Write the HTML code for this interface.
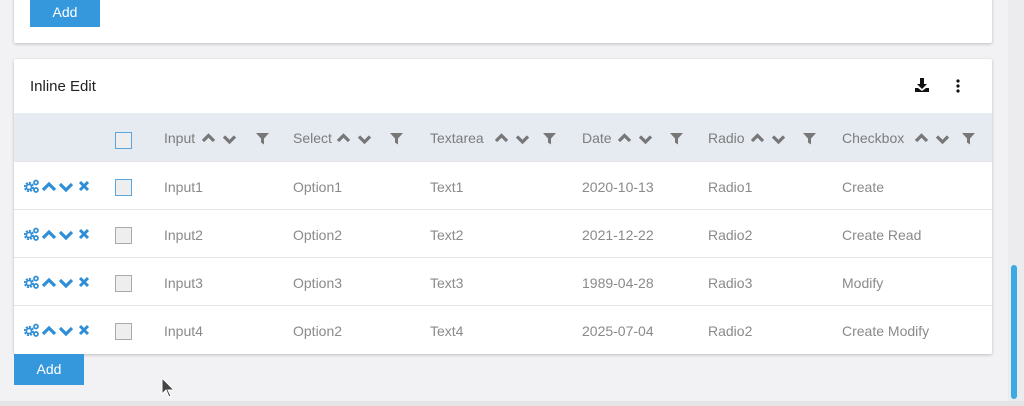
<!DOCTYPE html>
<html><head><meta charset="utf-8"><style>
*{margin:0;padding:0;box-sizing:border-box}
body{width:1024px;height:406px;background:#f2f2f4;font-family:"Liberation Sans",sans-serif;position:relative;overflow:hidden}
.card{position:absolute;background:#fff;box-shadow:0 1px 3px rgba(0,0,0,.22);border-radius:2px}
.btn{position:absolute;background:#3598dc;color:#fff;font-size:14px;text-align:center}
.t{position:absolute;font-size:14px;color:#8a8a8a}
.h{color:#7d7d7d}
.cb{position:absolute;width:17px;height:17px;background:#eee;border:1px solid #aaa}
.cb.b{border-color:#5aa7e0}
.row{position:absolute;left:0;width:978px;height:48px;border-top:1px solid #e5e5e5}
svg{position:absolute}
</style></head><body>
<div class="card" style="left:14px;top:-6px;width:978px;height:49px"></div>
<div class="btn" style="left:30px;top:0;width:70px;height:27px;line-height:24px">Add</div>

<div class="card" style="left:14px;top:59px;width:978px;height:295px">
  <div class="t" style="left:16px;top:19px;color:#222;font-size:15px">Inline Edit</div>
  <svg style="left:900px;top:18px" width="16" height="16" viewBox="0 0 16 16"><path d="M6 1h4v6h3l-5 5-5-5h3z" fill="#111"/><path d="M1 11h3l4 3 4-3h3v4H1z" fill="#111"/></svg>
  <svg style="left:942px;top:20px" width="4" height="14" viewBox="0 0 4 14"><circle cx="2" cy="2" r="1.6" fill="#111"/><circle cx="2" cy="7" r="1.6" fill="#111"/><circle cx="2" cy="12" r="1.6" fill="#111"/></svg>
  <div style="position:absolute;left:0;top:54px;width:978px;height:48px;background:#e6eaf1"></div>
</div>

<div id="tbl" style="position:absolute;left:14px;top:113px;width:978px;height:241px"></div>

<div class="btn" style="left:14px;top:354px;width:70px;height:31px;line-height:31px">Add</div>
<svg style="left:161px;top:377px" width="14" height="22" viewBox="0 0 14 22"><path d="M1 1v16l4-4 3 7 2-1-3-6h6z" fill="#444" stroke="#fff" stroke-width="1"/></svg>

<div style="position:absolute;left:1008px;top:0;width:16px;height:401px;background:#ececef"></div>
<div style="position:absolute;left:1011px;top:265px;width:6px;height:134px;background:#3aa9e6;border-radius:3px"></div>
<div style="position:absolute;left:0;top:401px;width:1024px;height:5px;background:#e4e4e6"></div>

<script>
var T=document.getElementById('tbl');
var up='<path d="M2 9l5.5-5.5 5.5 5.5" fill="none" stroke="#777" stroke-width="3.2"/>';
var dn='<path d="M2 3.5l5.5 5.5 5.5-5.5" fill="none" stroke="#777" stroke-width="3.2"/>';
var fl='<path d="M0 0h13l-5 5.5v6l-3-2v-4z" fill="#777"/>';
var cols=[[150,'Input',187,242],[279,'Select',322,376],[416,'Textarea',480,529],[568,'Date',603,656],[694,'Radio',736,789],[828,'Checkbox',900,948]];
var h='<div class="cb b" style="left:101px;top:19px"></div>';
cols.forEach(function(c){
 h+='<div class="t h" style="left:'+c[0]+'px;top:17px">'+c[1]+'</div>';
 h+='<svg style="left:'+c[2]+'px;top:19px" width="15" height="12">'+up+'</svg>';
 h+='<svg style="left:'+(c[2]+21)+'px;top:20px" width="15" height="12">'+dn+'</svg>';
 h+='<svg style="left:'+c[3]+'px;top:20px" width="13" height="12">'+fl+'</svg>';
});
var data=[['Input1','Option1','Text1','2020-10-13','Radio1','Create'],['Input2','Option2','Text2','2021-12-22','Radio2','Create Read'],['Input3','Option3','Text3','1989-04-28','Radio3','Modify'],['Input4','Option2','Text4','2025-07-04','Radio2','Create Modify']];
var bl='#2f8fd6';
data.forEach(function(r,i){
 var y=48+i*48;
 h+='<div class="row" style="top:'+y+'px">';
 h+='<svg style="left:10px;top:17px" width="68" height="14" viewBox="0 0 68 14">'+
 '<circle cx="5" cy="8" r="3.6" fill="none" stroke="'+bl+'" stroke-width="3" stroke-dasharray="1.8 1"/><circle cx="5" cy="8" r="2.6" fill="none" stroke="'+bl+'" stroke-width="1.6"/><circle cx="12" cy="3.5" r="2" fill="none" stroke="'+bl+'" stroke-width="1.7"/><circle cx="12" cy="11" r="2" fill="none" stroke="'+bl+'" stroke-width="1.7"/>'+
 '<path d="M19 11l6-6 6 6" fill="none" stroke="'+bl+'" stroke-width="3.2"/>'+
 '<path d="M36 5l6 6 6-6" fill="none" stroke="'+bl+'" stroke-width="3.2"/>'+
 '<path d="M56 3l8 8M64 3l-8 8" stroke="'+bl+'" stroke-width="3"/></svg>';
 h+='<div class="cb'+(i==0?' b':'')+'" style="left:101px;top:17px"></div>';
 r.forEach(function(v,j){h+='<div class="t" style="left:'+cols[j][0]+'px;top:17px">'+v+'</div>';});
 h+='</div>';
});
T.innerHTML=h;
</script>
</body></html>
